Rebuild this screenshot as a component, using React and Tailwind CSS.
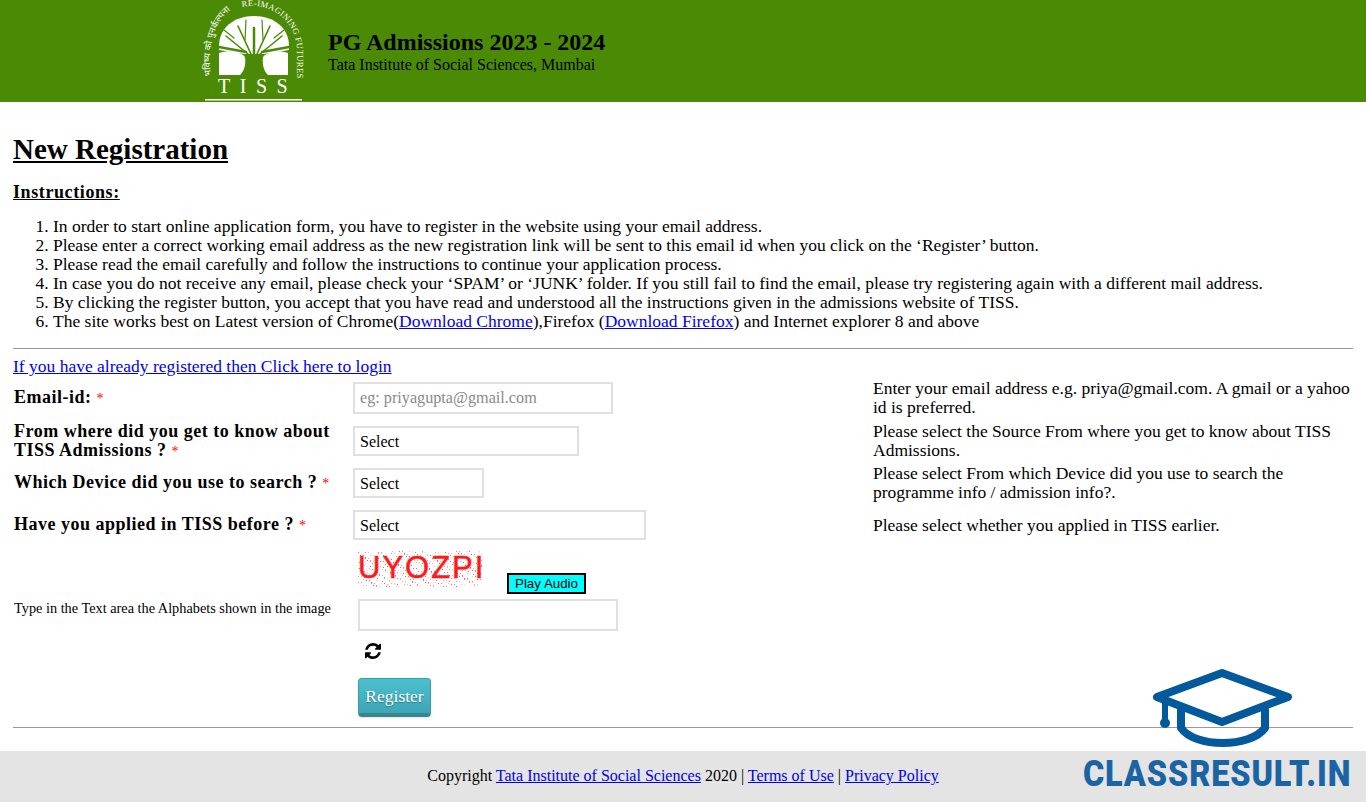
const body = "font-['Liberation_Serif',serif]";

function Logo() {
  return (
    <svg width="100" height="102" viewBox="0 0 100 102" className="block overflow-visible">
      <defs>
        <path id="arc-text" d="M 38 7 C 66 1 92 20 93 50 L 93 92" fill="none" />
        <path id="arc-hindi" d="M 7 76 C 3 44 12 14 37 4" fill="none" />
      </defs>
      <text fontFamily="'Noto Sans',sans-serif" fontSize="9" fill="#fff" letterSpacing="0.2">
        <textPath href="#arc-hindi">भविष्य को पुनर्कल्पना</textPath>
      </text>
      <text fontFamily="'Liberation Serif',serif" fontSize="8.6" fill="#fff" letterSpacing="0.35">
        <textPath href="#arc-text">RE-IMAGINING FUTURES</textPath>
      </text>
      <path d="M15 50 V46 C15 28 30 16 50 16 C70 16 85 28 85 46 V50 L60 54 H40 Z" fill="#fff" />
      <path d="M15 75 V53 C24 50 36 51 41 57 C42 65 40 71 36 75 Z" fill="#fff" />
      <path d="M84 75 V53 C75 50 64 51 59 57 C58 65 60 71 64 75 Z" fill="#fff" />
      <g stroke="#4b8a05" fill="none" strokeLinecap="round">
        <path d="M50 56 L50 28" strokeWidth="2.5" />
        <path d="M47 54 L34 26" strokeWidth="1.6" />
        <path d="M53 54 L66 26" strokeWidth="1.6" />
        <path d="M44 54 L22 36" strokeWidth="1.6" />
        <path d="M56 54 L78 36" strokeWidth="1.6" />
        <path d="M42 52 L15 47" strokeWidth="2.4" />
        <path d="M58 52 L85 47" strokeWidth="2.4" />
        <path d="M41 40 L42 20" strokeWidth="1.2" />
        <path d="M59 40 L58 20" strokeWidth="1.2" />
        <path d="M30 38 L20 30" strokeWidth="1.2" />
        <path d="M70 38 L80 30" strokeWidth="1.2" />
      </g>
      <text x="14" y="93" fontFamily="'Liberation Serif',serif" fontSize="20" fill="#fff" letterSpacing="9.5">TISS</text>
      <rect x="1" y="99" width="97" height="1.5" fill="#fff" />
    </svg>
  );
}

function Captcha() {
  const dots = [];
  for (let i = 0; i < 420; i++) {
    dots.push(<rect key={i} x={(i * 47) % 124} y={(i * 29 + (i % 7)) % 36} width="1" height="1" fill="#ff3030" opacity={0.2 + (i % 5) * 0.15} />);
  }
  return (
    <div className="relative w-[125px] h-[37px]">
      <svg width="125" height="37" className="absolute left-0 top-0">{dots}</svg>
      <span className="absolute left-0 top-0 font-['Liberation_Sans',sans-serif] text-[31px] leading-[34px] tracking-[2px] text-[#ff1a1a] [-webkit-text-stroke:0.5px_#ff1a1a] whitespace-nowrap">UYOZPI</span>
    </div>
  );
}

function Req() {
  return <span className="text-[#ff0000] font-normal text-[14px]"> *</span>;
}

function FormRow({ label, control, help, rowClass }) {
  return (
    <div className={`flex ${rowClass}`}>
      <div className="w-[340px] pl-px pr-2 font-bold text-[18px] tracking-[0.5px] flex items-center">
        <div>{label}</div>
      </div>
      <div className="w-[520px] flex items-center">{control}</div>
      <div className="w-[480px] flex items-center">
        <div>{help}</div>
      </div>
    </div>
  );
}

function SelectBox({ w }) {
  return (
    <div className={`${w} h-[30px] border-2 border-[#e0e0e0] bg-white pl-[5px] flex items-center text-[16px] text-black`}>
      Select
    </div>
  );
}

const items = [
  "In order to start online application form, you have to register in the website using your email address.",
  "Please enter a correct working email address as the new registration link will be sent to this email id when you click on the ‘Register’ button.",
  "Please read the email carefully and follow the instructions to continue your application process.",
  "In case you do not receive any email, please check your ‘SPAM’ or ‘JUNK’ folder. If you still fail to find the email, please try registering again with a different mail address.",
  "By clicking the register button, you accept that you have read and understood all the instructions given in the admissions website of TISS.",
];

export default function App() {
  return (
    <div className={`relative h-[802px] overflow-hidden bg-white text-black ${body} text-[17.5px] leading-[19px]`}>
      <header className="h-[102px] bg-[#4b8a05] flex items-start pl-[204px]">
        <Logo />
        <div className="ml-6 mt-[29px]">
          <div className="text-[24px] leading-[26px] font-bold">PG Admissions 2023 - 2024</div>
          <div className="text-[16px] leading-[19px]">Tata Institute of Social Sciences, Mumbai</div>
        </div>
      </header>

      <main className="px-[13px]">
        <h1 className="mt-[29px] text-[29px] leading-[36px] font-bold underline">New Registration</h1>
        <h2 className="mt-[16px] text-[18px] leading-[19px] font-bold tracking-[0.6px] underline">Instructions:</h2>
        <ol className="mt-[15px] pl-10 list-decimal">
          {items.map((t) => <li key={t}>{t}</li>)}
          <li>
            The site works best on Latest version of Chrome(<a href="#" className="text-[#0000ee] underline">Download Chrome</a>),Firefox (<a href="#" className="text-[#0000ee] underline">Download Firefox</a>) and Internet explorer 8 and above
          </li>
        </ol>
        <hr className="mt-[17px] border-0 border-t border-t-[#999999]" />
        <a href="#" className="block mt-[8px] text-[#0000ee] underline">If you have already registered then Click here to login</a>

        <div className="mt-[4px]">
          <FormRow
            rowClass="h-[36px]"
            label={<>Email-id: <Req /></>}
            control={
              <div className="w-[260px] h-[32px] border-2 border-[#e0e0e0] pl-[5px] flex items-center text-[16.2px] text-[#8a8a8a]">eg: priyagupta@gmail.com</div>
            }
            help="Enter your email address e.g. priya@gmail.com. A gmail or a yahoo id is preferred."
          />
          <FormRow rowClass="h-[42px] mt-[4px]" label={<>From where did you get to know about TISS Admissions ? <Req /></>} control={<SelectBox w="w-[226px]" />} help="Please select the Source From where you get to know about TISS Admissions." />
          <FormRow rowClass="h-[42px]" label={<>Which Device did you use to search ? <Req /></>} control={<SelectBox w="w-[131px]" />} help="Please select From which Device did you use to search the programme info / admission info?." />
          <FormRow rowClass="h-[42px]" label={<>Have you applied in TISS before ? <Req /></>} control={<SelectBox w="w-[293px]" />} help="Please select whether you applied in TISS earlier." />
        </div>

        <div className="flex mt-[5px]">
          <div className="w-[345px] pl-px pt-[49px] text-[14.3px] leading-[16px]">Type in the Text area the Alphabets shown in the image</div>
          <div>
            <div className="flex items-end">
              <Captcha />
              <button className="ml-[24px] -mb-[6px] w-[79px] h-[21px] bg-[#00ffff] border-2 border-black font-['Liberation_Sans',sans-serif] text-[13.33px] leading-[15px] text-black">Play Audio</button>
            </div>
            <div className="mt-[11px] w-[260px] h-[32px] border-2 border-[#e0e0e0]" />
            <svg className="mt-[12px] ml-[7px]" width="16" height="16" viewBox="0 0 1536 1536">
              <path fill="#000" d="M1511 928q0 5-1 7-64 268-268 434.5T764 1536q-146 0-282.5-55T238 1324l-129 129q-19 19-45 19t-45-19-19-45V960q0-26 19-45t45-19h448q26 0 45 19t19 45-19 45l-137 137q71 66 161 102t187 36q134 0 250-65t186-179q11-17 53-117 8-23 30-23h192q13 0 22.5 9.5t9.5 22.5zm25-800v448q0 26-19 45t-45 19h-448q-26 0-45-19t-19-45 19-45l138-138q-148-137-349-137-134 0-250 65T332 500q-11 17-53 117-8 23-30 23H50q-13 0-22.5-9.5T18 608v-7q65-268 270-434.5T768 0q146 0 284 55.5T1297 212l130-129q19-19 45-19t45 19 19 45z" />
            </svg>
            <button className="mt-[19px] block w-[73px] h-[39px] rounded-[4px] border border-[#3a9aa8] border-b-[4px] border-b-[#39868f] bg-gradient-to-b from-[#4cc0cf] to-[#3ea5b6] text-white text-[17.5px] leading-[20px] [text-shadow:0_1px_1px_rgba(0,0,0,0.35)] shadow-sm">Register</button>
          </div>
        </div>
        <hr className="mt-[10px] border-0 border-t border-t-[#999999]" />
      </main>

      <footer className="absolute left-0 right-0 bottom-0 h-[51px] pb-[2px] bg-[#e4e4e4] flex items-center justify-center text-[16px]">
        <span>Copyright <a href="#" className="text-[#0000ee] underline">Tata Institute of Social Sciences</a> 2020 | <a href="#" className="text-[#0000ee] underline">Terms of Use</a> | <a href="#" className="text-[#0000ee] underline">Privacy Policy</a></span>
      </footer>

      <div className="absolute left-[1082px] top-[668px] w-[270px] flex flex-col items-center">
        <svg className="self-start ml-[68px]" width="146" height="82" viewBox="0 0 146 82" fill="none" stroke="#02599c" strokeLinejoin="round" strokeLinecap="round">
          <path d="M72 5 L138 29 L72 54 L7 29 Z" strokeWidth="8" />
          <path d="M15 32 V54" strokeWidth="6" />
          <circle cx="15" cy="55" r="5" fill="#02599c" stroke="none" />
          <path d="M31 42 V60 C45 80 100 80 115 60 V42" strokeWidth="8" />
        </svg>
        <div className="mt-[6px] font-['Roboto',sans-serif] font-black text-[36px] leading-[36px] tracking-[1px] scale-x-[0.9] text-[#1b64a4] whitespace-nowrap">CLASSRESULT.IN</div>
      </div>
    </div>
  );
}
